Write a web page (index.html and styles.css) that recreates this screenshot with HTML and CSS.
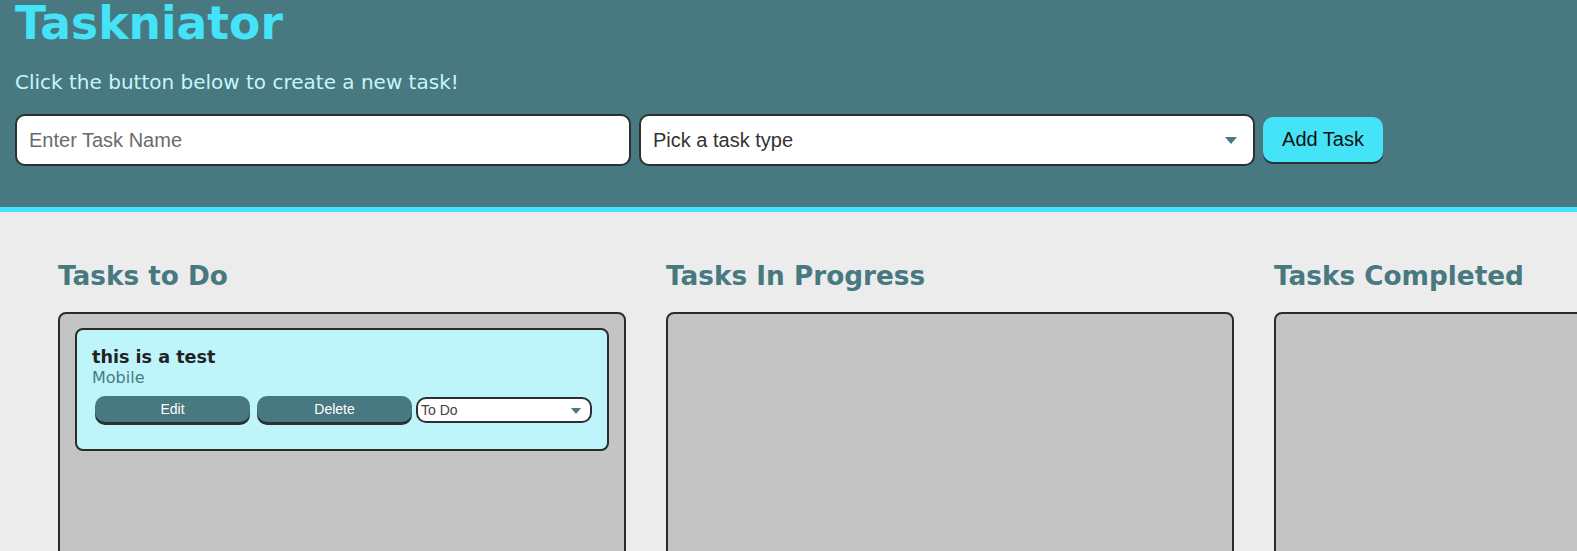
FILE: index.html
```html
<!DOCTYPE html>
<html>
<head>
<meta charset="utf-8">
<title>Taskniator</title>
<link rel="stylesheet" href="styles.css">
</head>
<body>
<header class="header">
  <h1 class="title">Taskniator</h1>
  <p class="subtitle">Click the button below to create a new task!</p>
  <form class="task-form">
    <input class="task-input" type="text" placeholder="Enter Task Name">
    <div class="select-wrap big">
      <select class="task-select">
        <option>Pick a task type</option>
      </select>
    </div>
    <button class="add-btn" type="button">Add Task</button>
  </form>
</header>
<main class="board">
  <section class="column">
    <h2 class="col-title">Tasks to Do</h2>
    <div class="col-box">
      <div class="card">
        <h3 class="card-title">this is a test</h3>
        <p class="card-type">Mobile</p>
        <div class="card-actions">
          <button class="card-btn" type="button">Edit</button>
          <button class="card-btn" type="button">Delete</button>
          <div class="select-wrap small">
            <select class="status-select"><option>To Do</option></select>
          </div>
        </div>
      </div>
    </div>
  </section>
  <section class="column">
    <h2 class="col-title">Tasks In Progress</h2>
    <div class="col-box"></div>
  </section>
  <section class="column">
    <h2 class="col-title">Tasks Completed</h2>
    <div class="col-box"></div>
  </section>
</main>
</body>
</html>
```
FILE: styles.css
```css
html, body {
  margin: 0;
  padding: 0;
  height: 100%;
  overflow: hidden;
}
body {
  background: #ececec;
  font-family: "DejaVu Sans", Verdana, sans-serif;
}
.header {
  background: #487880;
  border-bottom: 5px solid #45e3f8;
  padding: 0 15px 0 15px;
  height: 207px;
  box-sizing: content-box;
}
.title {
  margin: 0;
  font-size: 45.6px;
  line-height: 48px;
  color: #45e3f8;
  font-weight: bold;
}
.subtitle {
  margin: 22px 0 0 0;
  font-size: 20px;
  line-height: 24px;
  color: #c4f7fb;
}
.task-form {
  display: flex;
  align-items: center;
  gap: 8px;
  margin-top: 20px;
}
.task-input {
  width: 616px;
  height: 52px;
  box-sizing: border-box;
  border: 2px solid #2a3033;
  border-radius: 10px;
  padding: 0 12px;
  font-family: "Liberation Sans", Arial, sans-serif;
  font-size: 20px;
  background: #fff;
  outline: none;
}
.task-input::placeholder {
  color: #6b6b6b;
}
.select-wrap {
  position: relative;
}
.select-wrap::after {
  content: "";
  position: absolute;
  top: 50%;
  width: 0;
  height: 0;
  border-left: 6px solid transparent;
  border-right: 6px solid transparent;
  border-top: 7px solid #487880;
  pointer-events: none;
}
.select-wrap.big::after {
  right: 18px;
  margin-top: -3px;
}
.select-wrap.small::after {
  right: 11px;
  margin-top: -2px;
  border-left-width: 5px;
  border-right-width: 5px;
  border-top-width: 6px;
}
.task-select {
  appearance: none;
  -webkit-appearance: none;
  width: 616px;
  height: 52px;
  box-sizing: border-box;
  border: 2px solid #2a3033;
  border-radius: 10px;
  padding: 0 12px;
  font-family: "Liberation Sans", Arial, sans-serif;
  font-size: 20px;
  color: #333;
  background: #fff;
}
.add-btn {
  height: 45px;
  width: 120px;
  box-sizing: border-box;
  border: none;
  border-radius: 10px;
  background: #45e3f8;
  color: #111;
  font-family: "Liberation Sans", Arial, sans-serif;
  font-size: 20px;
  box-shadow: 0 2px 0 #2a3033;
  margin-top: -2px;
  padding: 0;
}
.board {
  display: grid;
  grid-template-columns: 568px 568px 568px;
  column-gap: 40px;
  padding: 48px 0 0 58px;
}
.col-title {
  margin: 0;
  font-size: 26.3px;
  line-height: 32px;
  color: #487880;
  font-weight: bold;
}
.col-box {
  margin-top: 20px;
  height: 400px;
  background: #c4c4c4;
  border: 2px solid #2b2b2b;
  border-radius: 8px;
  padding: 14px 15px;
}
.card {
  background: #bdf5fb;
  border: 2px solid #2b2b2b;
  border-radius: 8px;
  padding: 16px 15px 26px 15px;
}
.card-title {
  margin: 0;
  font-size: 17.6px;
  line-height: 22px;
  color: #222;
  font-weight: bold;
}
.card-type {
  margin: 0;
  font-size: 16px;
  line-height: 19px;
  color: #4a7a80;
}
.card-actions {
  display: flex;
  align-items: center;
  gap: 7px;
  margin-top: 10px;
  padding-left: 3px;
}
.card-btn {
  width: 155px;
  height: 26px;
  border: none;
  border-radius: 10px;
  background: #487880;
  color: #fff;
  font-family: "Liberation Sans", Arial, sans-serif;
  font-size: 14px;
  box-shadow: 0 3px 0 #2a3033;
  padding: 0;
  margin-top: -3px;
}
.status-select {
  appearance: none;
  -webkit-appearance: none;
  width: 176px;
  height: 26px;
  box-sizing: border-box;
  border: 2px solid #2a3033;
  border-radius: 10px;
  padding: 0 3px;
  font-family: "Liberation Sans", Arial, sans-serif;
  font-size: 14px;
  color: #444;
  background: #fff;
  margin-left: -3px;
}
```
